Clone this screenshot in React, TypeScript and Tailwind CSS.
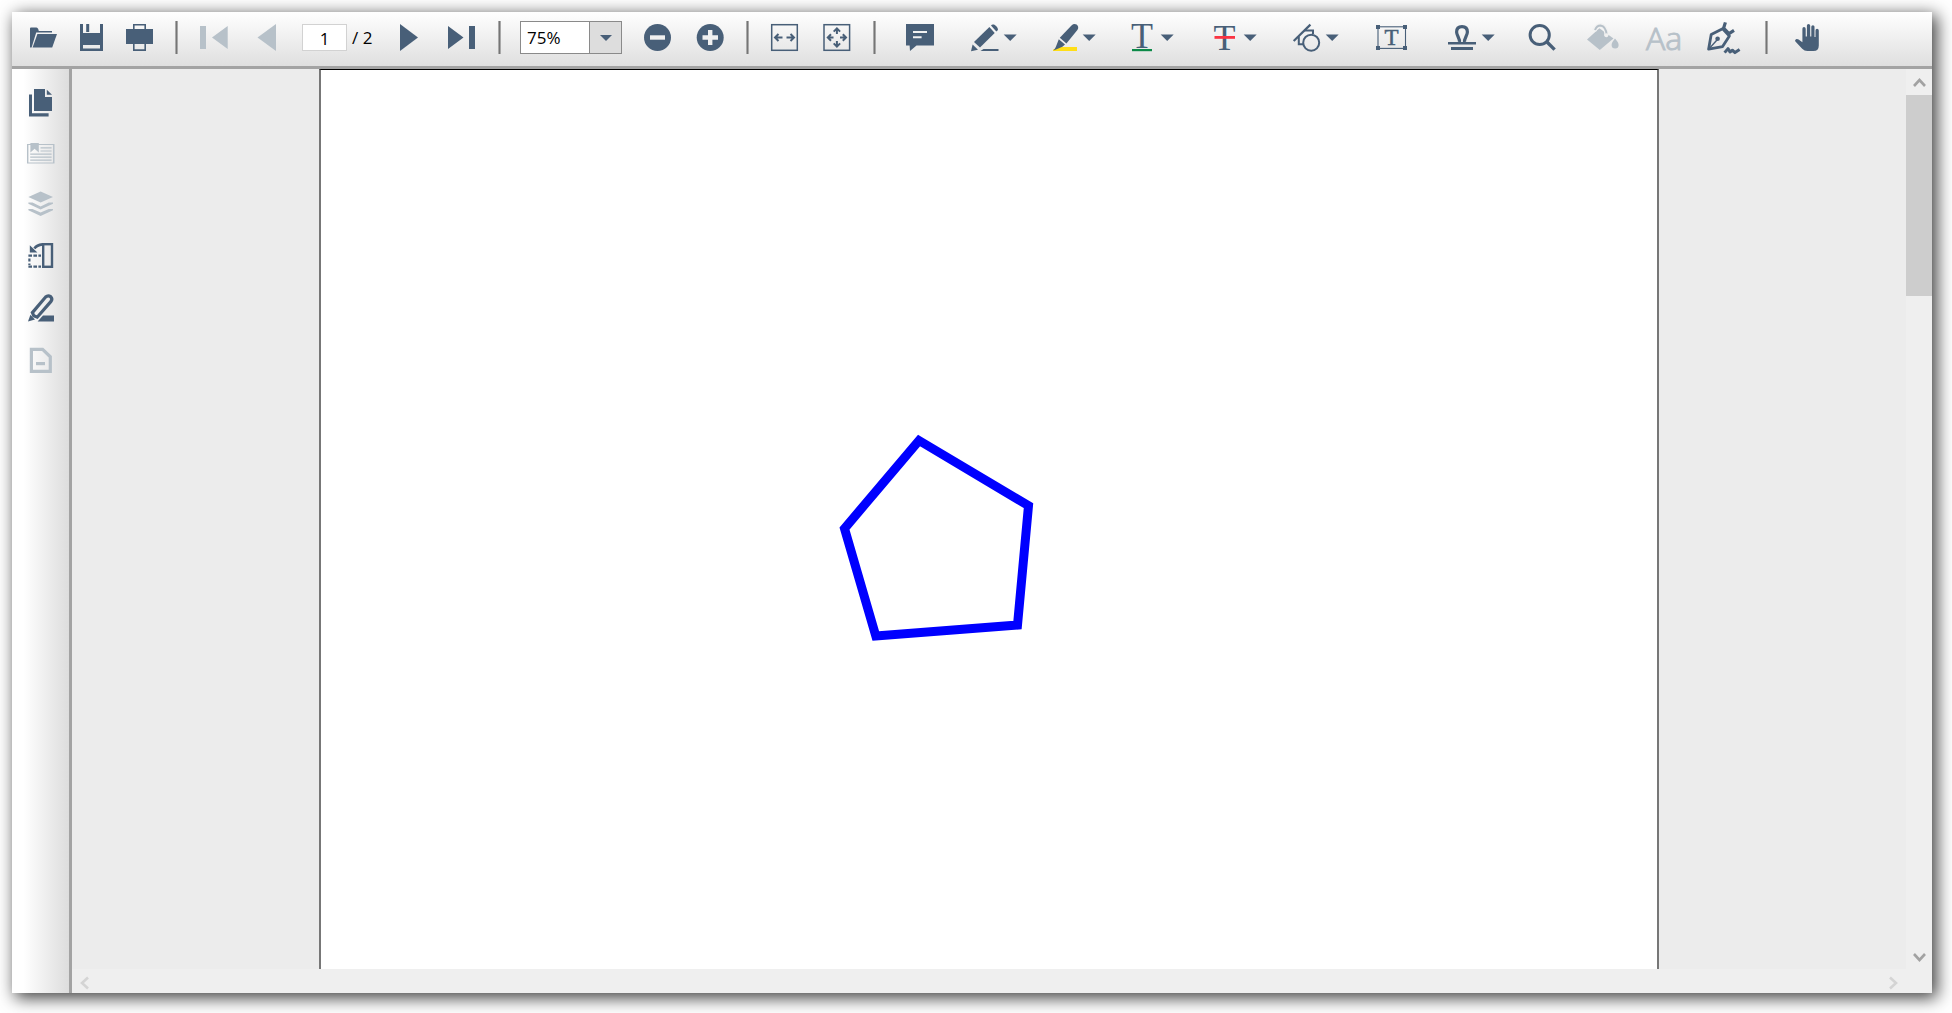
import type { ReactNode } from "react";

const ON = "text-[#485f78]";
const OFF = "text-[#b7c1c9]";

function Icon({ children, wide }: { children: ReactNode; wide?: boolean }) {
  return (
    <svg
      className={wide ? "h-[27px] w-8 shrink-0 overflow-visible" : "h-[27px] w-7 shrink-0 overflow-visible"}
      viewBox={wide ? "0 0 32 27" : "0 0 28 27"}
      fill="currentColor"
      aria-hidden="true"
    >
      {children}
    </svg>
  );
}

function Tool({
  label,
  gap,
  disabled,
  menu,
  wide,
  children,
}: {
  label: string;
  gap: string;
  disabled?: boolean;
  menu?: boolean;
  wide?: boolean;
  children: ReactNode;
}) {
  return (
    <button
      type="button"
      aria-label={label}
      title={label}
      disabled={disabled}
      className={`flex shrink-0 items-center gap-1 ${gap} ${disabled ? OFF : ON}`}
    >
      <Icon wide={wide}>{children}</Icon>
      {menu && (
        <svg className="h-[27px] w-3.5 shrink-0" viewBox="0 0 14 27" fill="currentColor" aria-hidden="true">
          <path d="M0.7 10.5H13.7L7.2 17Z" />
        </svg>
      )}
    </button>
  );
}

function Divider({ gap }: { gap: string }) {
  return <span className={`h-[33px] w-[3px] shrink-0 border-x border-[#a9a9a9] bg-[#757575] ${gap}`} />;
}

function Chevron({ d, className }: { d: string; className: string }) {
  return (
    <svg className={className} viewBox="0 0 26 26" fill="none" stroke="currentColor" strokeWidth="2.6" aria-hidden="true">
      <path d={d} />
    </svg>
  );
}

function Toolbar() {
  return (
    <header className="flex h-[57px] shrink-0 items-center overflow-hidden border-b-[3px] border-[#a3a3a3] bg-linear-to-b from-white to-[#dfdfdf] pb-[3px] font-['Open_Sans','Noto_Sans',sans-serif] text-[17px] text-black">
      <Tool label="Open" gap="ml-[18px]">
        <path d="M0 23.5V4.5Q0 3.4 1 3.4H6.5Q7.6 3.4 8.2 5L8.8 7H22V8.4H6.2L1.6 23.5Z" />
        <path d="M7.4 10H27L22.2 23.5H2.6Z" />
      </Tool>
      <Tool label="Save" gap="ml-5">
        <path fillRule="evenodd" d="M2 0H5V9H22V0H25V27H2ZM5 21V24.5H22V21Z" />
        <rect x="8.2" y="0" width="3" height="8" />
      </Tool>
      <Tool label="Print" gap="ml-5">
        <path fillRule="evenodd" d="M7 0H20V5H27V20H20V27H7V20H0V5H7ZM8.6 1.6V5H18.4V1.6ZM8.6 20V25.2H18.4V20Z" />
      </Tool>
      <Divider gap="ml-[21px]" />
      <Tool label="First page" gap="ml-[22px]" disabled>
        <path d="M0 2H6V25H0ZM27.7 2V25L12 13.5Z" />
      </Tool>
      <Tool label="Previous page" gap="ml-6" disabled>
        <path d="M24 0V27L5.5 13.5Z" />
      </Tool>
      <input
        aria-label="Page number"
        defaultValue="1"
        className="ml-[22px] h-[27px] w-[45px] shrink-0 border border-[#d2d2d2] bg-white p-0 pt-px text-center"
      />
      <span className="ml-[5px] w-11 shrink-0 whitespace-pre">/ 2</span>
      <Tool label="Next page" gap="">
        <path d="M4 0V27L22 13.5Z" />
      </Tool>
      <Tool label="Last page" gap="ml-6">
        <path d="M0 2V25L15.5 13.5ZM21 2H27V25H21Z" />
      </Tool>
      <Divider gap="ml-[22px]" />
      <div className="relative ml-[19px] h-[33px] w-[102px] shrink-0 border border-[#8a8a8a] bg-white">
        <select
          aria-label="Zoom"
          defaultValue="75%"
          className="h-full w-full appearance-none bg-transparent pt-px pr-8 pl-1.5"
        >
          <option>50%</option>
          <option>75%</option>
          <option>100%</option>
        </select>
        <span className="pointer-events-none absolute inset-y-0 right-0 flex w-8 items-center justify-center border-l border-[#8a8a8a] bg-[#dddddd] text-[#485f78]">
          <svg className="h-1.5 w-3" viewBox="0 0 12 6" fill="currentColor" aria-hidden="true">
            <path d="M0 0H12L6 6Z" />
          </svg>
        </span>
      </div>
      <Tool label="Zoom out" gap="ml-[22px]">
        <circle cx="13.5" cy="13.5" r="13.5" />
        <rect x="6" y="11.3" width="15" height="4.4" fill="#f0f0f0" />
      </Tool>
      <Tool label="Zoom in" gap="ml-6">
        <circle cx="14.2" cy="13.5" r="13.5" />
        <path d="M6.5 11.3H12V6H16.4V11.3H22V15.7H16.4V21H12V15.7H6.5Z" fill="#f0f0f0" />
      </Tool>
      <Divider gap="ml-[22px]" />
      <Tool label="Fit width" gap="ml-[22px]">
        <rect x="0.7" y="0.7" width="25.6" height="25.6" fill="none" stroke="currentColor" strokeWidth="1.5" />
        <path d="M11.5 13.5H5M7.5 10L4 13.5L7.5 17M15.5 13.5H22M19.5 10L23 13.5L19.5 17" fill="none" stroke="currentColor" strokeWidth="2" />
      </Tool>
      <Tool label="Fit page" gap="ml-6">
        <rect x="1" y="0.7" width="25.6" height="25.6" fill="none" stroke="currentColor" strokeWidth="1.5" />
        <path
          d="M10.5 13.5H5M8 10.3L4.8 13.5L8 16.7M17 13.5H22.6M19.8 10.3L23 13.5L19.8 16.7M13.9 10V4.6M10.7 7.6L13.9 4.4L17.1 7.6M13.9 17V22.4M10.7 19.4L13.9 22.6L17.1 19.4"
          fill="none"
          stroke="currentColor"
          strokeWidth="2"
        />
      </Tool>
      <Divider gap="ml-[22px]" />
      <Tool label="Comment" gap="ml-[30px]">
        <path d="M0 0H28V21.5H10.5L4 27L3.6 21.5H0Z" />
        <path d="M7 8H21M7 13.2H15.6" stroke="#f2f2f2" strokeWidth="2" />
      </Tool>
      <Tool label="Draw" gap="ml-[37px]" menu>
        <path d="M18.4 3L23.7 9L9 23.6L3 18Z" />
        <path d="M20 1.4Q21 0 23 0.6Q27 3 27 6L25.3 7.6Z" />
        <path d="M1.6 20.5L7 25.7L0 27.3Z" />
        <path d="M12.5 25H27.5V27H9.5Z" />
      </Tool>
      <Tool label="Highlight" gap="ml-[33px]" menu>
        <path d="M10 23H27V27H3V25.4Z" fill="#ffde17" />
        <path d="M21.5 1.5Q24 -0.8 26.6 0.6Q29.4 3 27.4 6L16.4 19.5L9.8 13.8Z" />
        <path d="M8.8 15.2L15 20.6L12.4 22.8L3.6 26.4Q5.6 24 6.2 22Z" />
      </Tool>
      <Tool label="Underline text" gap="ml-8" menu>
        <text x="14" y="23.5" fontSize="36" textAnchor="middle" fontFamily="'Liberation Serif', serif">
          T
        </text>
        <rect x="4" y="25" width="20" height="2.2" fill="#0c8a48" />
      </Tool>
      <Tool label="Strike out text" gap="ml-[37px]" menu>
        <text x="13.5" y="26" fontSize="36" textAnchor="middle" fontFamily="'Liberation Serif', serif">
          T
        </text>
        <rect x="3.5" y="12" width="20.5" height="2.8" fill="#fa3443" />
      </Tool>
      <Tool label="Shapes" gap="ml-9" menu>
        <g fill="none" stroke="currentColor" strokeWidth="2">
          <path d="M0.7 17L17.4 0.6" strokeWidth="2.2" />
          <path d="M11.5 6.5H20V10M5.8 12.5V20.3H10" />
          <circle cx="18.2" cy="18.7" r="8" />
        </g>
      </Tool>
      <Tool label="Text box" gap="ml-[37px]" wide>
        <rect x="2" y="2.8" width="27.5" height="21.6" fill="none" stroke="currentColor" strokeWidth="1.1" />
        <path d="M0 1H4V5H0ZM27 1H31V5H27ZM0 22H4V26H0ZM27 22H31V26H27Z" />
        <text x="15.6" y="20.6" fontSize="23" textAnchor="middle" fontFamily="'Liberation Serif', serif" stroke="currentColor" strokeWidth="0.5">
          T
        </text>
      </Tool>
      <Tool label="Stamp" gap="ml-[41px]" menu>
        <path d="M-1 18H27V20.6H-1ZM2 23H24V26H2Z" />
        <path
          d="M10.5 18C11 14.5 7.6 11.5 7.6 8Q7.6 2.6 13 2.6Q18.4 2.6 18.4 8C18.4 11.5 15 14.5 15.5 18"
          fill="none"
          stroke="currentColor"
          strokeWidth="3.2"
        />
      </Tool>
      <Tool label="Search" gap="ml-[33px]">
        <g fill="none" stroke="currentColor">
          <circle cx="11.7" cy="11" r="9.6" strokeWidth="3" />
          <path d="M18.5 17.5L26.6 25.6" strokeWidth="3.4" />
        </g>
      </Tool>
      <Tool label="Fill colour" gap="ml-[31px]" wide disabled>
        <path d="M0 15.4L12.4 4.2L26.5 14.6L12.8 26Z" />
        <path d="M7 7Q9 1.4 14 1.4Q19 1.8 19.6 11" fill="none" stroke="#f2f2f2" strokeWidth="4.4" />
        <path d="M8 6Q9.6 1.4 13.6 1.4Q19 2 19.6 11" fill="none" stroke="currentColor" strokeWidth="2" />
        <circle cx="19.3" cy="11.2" r="2" fill="#f0f0f0" />
        <path d="M28 14.6Q31.6 18.6 31.6 21A3.5 3.5 0 0 1 24.6 21Q24.6 18.6 28 14.6Z" />
      </Tool>
      <button
        type="button"
        disabled
        className="ml-[27px] h-[27px] w-[35px] shrink-0 text-[32px] leading-[27px] font-light text-[#b7c1c9] [-webkit-text-stroke:1px_#b7c1c9]"
      >
        Aa
      </button>
      <Tool label="Sign" gap="ml-[26px]" wide>
        <g fill="none" stroke="currentColor" strokeWidth="2.8" strokeLinejoin="round">
          <path d="M1.6 25.2L4.2 10.6L15.6 4.8L22.4 12L15.6 22.6Z" />
          <path d="M18.4 -1.6L16.6 4.2L22 9.6L27 6.4" strokeWidth="3.2" />
          <path d="M1.6 25.2L10 16" strokeWidth="1.4" />
          <path d="M17.6 28.6L21 24.6L23 28L25.4 26.2L28 28.6L32.6 25.6" strokeWidth="3" />
        </g>
        <circle cx="10.6" cy="14.8" r="2.3" />
      </Tool>
      <Divider gap="ml-[26px]" />
      <Tool label="Pan" gap="ml-[25px]">
        <path d="M9.4 16V4.8Q9.4 3 11 3T12.7 4.8V12.6H13.9V1.6Q13.9 0 15.5 0T17.2 1.6V12.6H18.3V2.8Q18.3 1.2 19.9 1.2T21.5 2.8V13H22.5V6.4Q22.5 4.8 24.1 4.8T25.8 6.4V21.5Q25.8 27 20.4 27H14.4Q11.4 27 9.2 24.8L2.4 17.6Q1.4 16 3 15.2Q4.4 14.8 5.6 15.6L9.4 18.2Z" />
      </Tool>
    </header>
  );
}

function Sidebar() {
  return (
    <nav className="flex w-[60px] shrink-0 flex-col items-center border-r-[3px] border-[#a3a3a3] bg-linear-to-r from-white from-20% to-[#dddddd] pt-5">
      <Tool label="Pages" gap="">
        <path d="M7 0H18V8H25V22H7Z" />
        <path d="M19.8 0.8L25 5.8H19.8Z" />
        <path d="M2 5.6H5V24.2H21.6V27.6H2Z" />
      </Tool>
      <Tool label="Bookmarks" gap="mt-6" disabled>
        <path fillRule="evenodd" d="M0 4H27.5V23.4H0ZM1.4 5V22.4H26.1V5Z" />
        <path d="M3.4 3H11.8V12.6L7.6 8.8L3.4 12.6Z" />
        <path d="M13.5 7.8H24.6M13.5 11H24.6M3.2 14.2H24.6M3.2 17.2H24.6M3.2 20.2H24.6" stroke="currentColor" strokeWidth="1.2" />
      </Tool>
      <Tool label="Layers" gap="mt-6" disabled>
        <path d="M13.6 0.6L26 6L13.6 11.6L1.4 6Z" />
        <path d="M1.4 11.6H5.5L13.6 15.4L21.8 11.6H26V12.8L13.6 18.6L1.4 12.8ZM1.4 18H5.5L13.6 21.6L21.8 18H26V19.2L13.6 25L1.4 19.2Z" />
      </Tool>
      <Tool label="Rotate" gap="mt-[25px]">
        <rect x="16.2" y="1.2" width="8.8" height="22.6" fill="none" stroke="currentColor" strokeWidth="2.4" />
        <path d="M1.4 12.6H14M1.4 23.6H14" fill="none" stroke="currentColor" strokeWidth="2.4" strokeDasharray="3.6 1.4" />
        <path d="M2.4 15.5V22" fill="none" stroke="currentColor" strokeWidth="2.2" strokeDasharray="3 2" />
        <path d="M15.4 1.4Q9.8 2 7.4 5.4" fill="none" stroke="currentColor" strokeWidth="2.6" />
        <path d="M2.8 2.2L10.4 9.4H2.8Z" />
      </Tool>
      <Tool label="Annotations" gap="mt-[25px]">
        <path
          d="M5.4 18.6L18.6 3Q21 0.8 23.6 2.6Q26 5 23.8 7.6L10.2 23.2L6.8 21.8Z"
          fill="none"
          stroke="currentColor"
          strokeWidth="3.2"
          transform="translate(0 -1)"
        />
        <path d="M3.4 19.8L8 24.4L1 26.4Z" />
        <path d="M16 20.6H27V26.4H10.6Z" />
      </Tool>
      <Tool label="Attachments" gap="mt-[25px]" disabled>
        <path d="M4.4 2.4H15.6L23.3 9.8V24.4H4.4Z" fill="none" stroke="currentColor" strokeWidth="3.2" />
        <rect x="9" y="15" width="9" height="3.2" />
      </Tool>
    </nav>
  );
}

export default function App() {
  return (
    <div className="h-screen bg-white pt-3 pr-5 pb-5 pl-3">
      <div className="flex h-full flex-col shadow-[4px_4px_16px_1px_rgba(0,0,0,0.75)]">
        <Toolbar />
        <div className="flex min-h-0 flex-1">
          <Sidebar />
          <div className="flex min-w-0 flex-1 flex-col">
            <div className="flex min-h-0 flex-1">
              <main className="min-w-0 flex-1 overflow-hidden bg-[#ececec]">
                <div className="mx-auto h-full w-[73.1%] border-x-2 border-t border-x-[#777777] border-t-black bg-white pt-[361px]">
                  <svg className="ml-[38%] h-[210px] w-[210px]" viewBox="0 0 210 210" role="img" aria-label="Polygon annotation">
                    <path d="M90 9.5L199.5 74.7L188.5 194L46.8 205L15.5 97.5Z" fill="none" stroke="#0000ff" strokeWidth="9" />
                  </svg>
                </div>
              </main>
              <div className="flex w-[26px] shrink-0 flex-col justify-between bg-[#efefef] text-[#a2a2a2]">
                <div>
                  <Chevron className="h-[26px] w-[26px]" d="M8 17L13.5 11L19 17" />
                  <div className="h-[201px] bg-[#cdcdcd]" />
                </div>
                <Chevron className="h-[26px] w-[26px]" d="M8 11L13.5 17L19 11" />
              </div>
            </div>
            <div className="flex h-6 shrink-0 items-center justify-between bg-[#efefef] pt-1 pr-[26px] text-[#d4d4d4]">
              <Chevron className="h-[26px] w-[26px]" d="M16 7.5L10 13L16 18.5" />
              <Chevron className="h-[26px] w-[26px]" d="M10 7.5L16 13L10 18.5" />
            </div>
          </div>
        </div>
      </div>
    </div>
  );
}
